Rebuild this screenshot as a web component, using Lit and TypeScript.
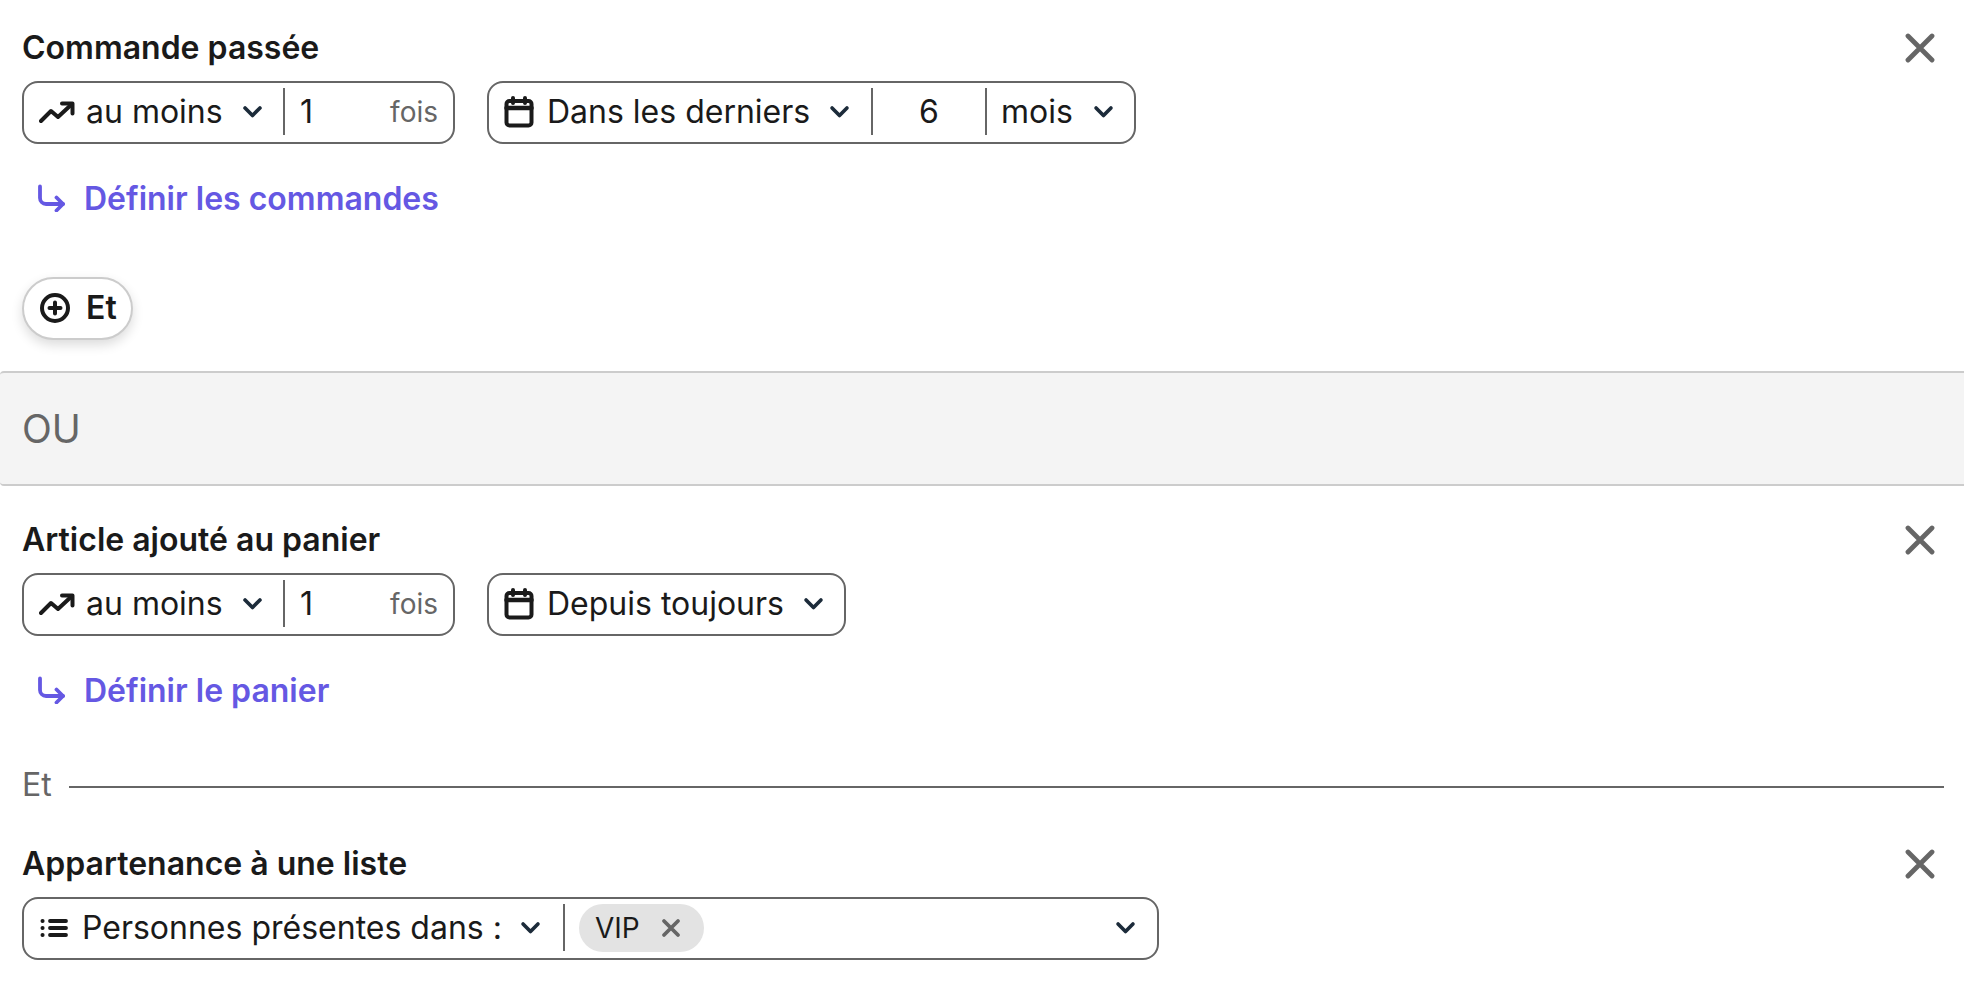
import { LitElement, html, css } from "lit";
import { customElement } from "lit/decorators.js";

const chevron = html`<svg class="chev" viewBox="0 0 24 24" fill="none" stroke="#1c2b3a" stroke-width="4.2" stroke-linecap="round" stroke-linejoin="round"><path d="M3.5 8l8.5 8.5L20.5 8"/></svg>`;
const trend = html`<svg class="ico trend" viewBox="0 0 36 24" fill="none" stroke="#1a1a1a" stroke-width="4" stroke-linecap="round" stroke-linejoin="round"><path d="M2 21l10-10 7 6 14-13"/><path d="M23 3.5h10.5v10"/></svg>`;
const cal = html`<svg class="ico cal" viewBox="0 0 30 32" fill="none" stroke="#1a1a1a" stroke-width="4" stroke-linecap="round" stroke-linejoin="round"><rect x="2.5" y="5.5" width="25" height="24.5" rx="3"/><path d="M2.5 12.5h25" stroke-width="4.5"/><path d="M9 2.5v5M21 2.5v5"/></svg>`;
const list = html`<svg class="ico lst" viewBox="0 0 28 20" fill="none" stroke="#1a1a1a" stroke-width="3.8" stroke-linecap="round"><path d="M10 3h16M10 10h16M10 17h16"/><path d="M2.5 3h.1M2.5 10h.1M2.5 17h.1" stroke-width="4"/></svg>`;
const turn = html`<svg class="turn" viewBox="0 0 28 28" fill="none" stroke="#6558e3" stroke-width="3.8" stroke-linecap="round" stroke-linejoin="round"><path d="M3 2.5v11.5a6 6 0 0 0 6 6h17"/><path d="M19.5 13.5l6.5 6.5-6.5 6.5"/></svg>`;
const closeX = html`<svg class="x" viewBox="0 0 30 30" fill="none" stroke="#666" stroke-width="4.8" stroke-linecap="round"><path d="M3 3l24 24M27 3L3 27"/></svg>`;
const chipX = html`<svg class="cx" viewBox="0 0 20 20" fill="none" stroke="#666" stroke-width="3.8" stroke-linecap="round"><path d="M3 3l14 14M17 3L3 17"/></svg>`;

@customElement("app-root")
export class AppRoot extends LitElement {
  static styles = css`
    :host { display: block; width: 100%; background: #fff; font-family: Inter, "Noto Sans", sans-serif; color: #1a1a1a; font-size: 32px; }
    * { box-sizing: border-box; }
    .sec { padding: 0 20px 0 22px; }
    .head { display: flex; justify-content: space-between; align-items: center; height: 36px; }
    .title { font-size: 32px; font-weight: 600; line-height: 36px; }
    .x { width: 30px; height: 30px; margin-right: 9px; }
    .row { display: flex; gap: 32px; margin-top: 15px; }
    .ctl { display: flex; align-items: center; height: 63px; padding-bottom: 2px; border: 2.5px solid #666; border-radius: 16px; white-space: nowrap; }
    .d { width: 2px; height: 47px; background: #666; flex: none; }
    .chev { width: 21px; height: 21px; flex: none; }
    .ico { flex: none; }
    .trend { width: 36px; height: 24px; }
    .cal { width: 30px; height: 33px; }
    .lst { width: 28px; height: 20px; }
    .s1 { display: flex; align-items: center; width: 259px; padding-left: 15px; }
    .s1 .lbl { margin-left: 11px; width: 156px; }
    .num { display: flex; align-items: center; justify-content: space-between; width: 168px; padding: 0 15px 0 15px; }
    .fois { font-size: 28px; color: #666; }
    .c2 { display: flex; align-items: center; padding-left: 15px; }
    .c2 .lbl { margin-left: 13px; }
    .c2 .chev { margin-left: 19px; }
    .c2.a { width: 382px; }
    .c2.b { padding-right: 20px; }
    .six { width: 112px; text-align: center; }
    .mois { display: flex; align-items: center; padding: 0 20px 0 14px; }
    .mois .chev { margin-left: 20px; }
    .link { display: flex; align-items: center; height: 36px; margin-top: 36px; padding-left: 15px; color: #6558e3; font-weight: 600; font-size: 32px; }
    .turn { width: 28px; height: 28px; margin-right: 19px; flex: none; }
    .btn { display: inline-flex; align-items: center; gap: 15px; height: 63px; width: 111px; margin-top: 61px; padding: 0 0 2px 15px; border: 2px solid #ccc; border-radius: 32px; background: #fff; box-shadow: 0 5px 12px rgba(0,0,0,0.14); font-weight: 600; font-size: 32px; }
    .btn svg { width: 32px; height: 32px; }
    .s1st { padding-top: 30px; padding-bottom: 31px; display: block; }
    .band { height: 115px; background: #f4f4f4; border-top: 2px solid #ccc; border-bottom: 2px solid #ccc; border-radius: 4px 0 0 4px; display: flex; align-items: center; padding-left: 22px; font-size: 39px; color: #666; }
    .s2nd { padding-top: 36px; }
    .sep { display: flex; align-items: center; gap: 17px; margin-top: 58px; height: 36px; color: #666; font-size: 32px; }
    .sep i { flex: 1; height: 2px; background: #666; display: block; margin-top: 5px; }
    .s3 { margin-top: 44px; }
    .c3 { width: 1137px; }
    .c3 .pre { display: flex; align-items: center; width: 539px; padding-left: 16px; }
    .c3 .pre .lbl { margin-left: 14px; width: 438px; }
    .c3 .rest { flex: 1; display: flex; align-items: center; padding: 0 21px 0 14px; justify-content: space-between; }
    .chip { display: flex; align-items: center; justify-content: space-between; width: 125px; height: 48px; border-radius: 24px; background: #e3e3e3; padding: 0 23px 0 16px; font-size: 28px; }
    .cx { width: 20px; height: 20px; }
  `;

  private s1() {
    return html`<div class="ctl">
      <div class="s1">${trend}<span class="lbl">au moins</span>${chevron}</div>
      <div class="d"></div>
      <div class="num"><span>1</span><span class="fois">fois</span></div>
    </div>`;
  }

  render() {
    return html`
      <div class="sec s1st">
        <div class="head"><span class="title">Commande passée</span>${closeX}</div>
        <div class="row">
          ${this.s1()}
          <div class="ctl">
            <div class="c2 a">${cal}<span class="lbl">Dans les derniers</span>${chevron}</div>
            <div class="d"></div>
            <div class="six">6</div>
            <div class="d"></div>
            <div class="mois"><span>mois</span>${chevron}</div>
          </div>
        </div>
        <div class="link">${turn}<span>Définir les commandes</span></div>
        <div class="btn">
          <svg viewBox="0 0 32 32" fill="none" stroke="#1a1a1a" stroke-width="4" stroke-linecap="round"><circle cx="16" cy="16" r="13"/><path d="M16 10.5v11M10.5 16h11"/></svg>
          <span>Et</span>
        </div>
      </div>
      <div class="band">OU</div>
      <div class="sec s2nd">
        <div class="head"><span class="title">Article ajouté au panier</span>${closeX}</div>
        <div class="row">
          ${this.s1()}
          <div class="ctl"><div class="c2 b">${cal}<span class="lbl">Depuis toujours</span>${chevron}</div></div>
        </div>
        <div class="link">${turn}<span>Définir le panier</span></div>
        <div class="sep"><span>Et</span><i></i></div>
        <div class="s3">
          <div class="head"><span class="title">Appartenance à une liste</span>${closeX}</div>
          <div class="row">
            <div class="ctl c3">
              <div class="pre">${list}<span class="lbl">Personnes présentes dans :</span>${chevron}</div>
              <div class="d"></div>
              <div class="rest">
                <div class="chip"><span>VIP</span>${chipX}</div>
                ${chevron}
              </div>
            </div>
          </div>
        </div>
      </div>
    `;
  }
}
